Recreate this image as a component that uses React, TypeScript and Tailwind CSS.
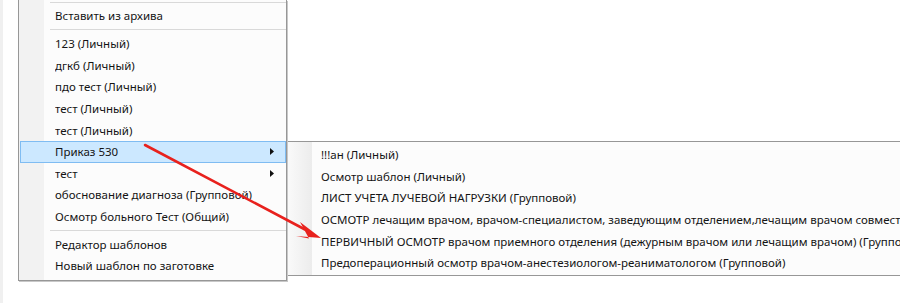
import React from "react";

type Item = { label: string; sub?: boolean; active?: boolean } | "sep";

const mainItems: Item[] = [
  { label: "Вставить из архива" },
  "sep",
  { label: "123 (Личный)" },
  { label: "дгкб (Личный)" },
  { label: "пдо тест (Личный)" },
  { label: "тест (Личный)" },
  { label: "тест (Личный)" },
  { label: "Приказ 530", sub: true, active: true },
  { label: "тест", sub: true },
  { label: "обоснование диагноза (Групповой)" },
  { label: "Осмотр больного Тест (Общий)" },
  "sep",
  { label: "Редактор шаблонов" },
  { label: "Новый шаблон по заготовке" },
];

const subItems = [
  "!!!ан (Личный)",
  "Осмотр шаблон (Личный)",
  "ЛИСТ УЧЕТА ЛУЧЕВОЙ НАГРУЗКИ (Групповой)",
  "ОСМОТР лечащим врачом, врачом-специалистом, заведующим отделением,лечащим врачом совместно",
  "ПЕРВИЧНЫЙ ОСМОТР врачом приемного отделения (дежурным врачом или лечащим врачом) (Групповой)",
  "Предоперационный осмотр врачом-анестезиологом-реаниматологом (Групповой)",
];

function Arrow() {
  return (
    <svg width="7" height="7" viewBox="0 0 7 7" className="shrink-0">
      <path d="M2 0 L6 3.5 L2 7 Z" fill="#111" />
    </svg>
  );
}

function MainMenu() {
  return (
    <div className="relative w-[269px] h-[281px] shrink-0 border-x border-b border-[#979797] bg-[#fcfcfc] shadow-[1px_1px_0_#c8c8c8] flex">
      <div className="absolute left-0 top-0 bottom-0 w-[25px] bg-[#f2f2f2]" />
      <div className="relative flex-1 flex flex-col pt-[2px]">
        <div className="h-px ml-[31px] bg-[#d9d9d9]" />
        <div className="h-[2px]" />
        {mainItems.map((it, i) =>
          it === "sep" ? (
            <div key={i} className="h-[6.4px] flex items-center">
              <div className="h-px w-full ml-[31px] bg-[#d9d9d9]" />
            </div>
          ) : (
            <div
              key={i}
              className={`h-[21.6px] flex items-center pl-[34px] pr-[10px] ml-px border ${
                it.active ? "bg-[#cce8ff] border-[#7fbcf2]" : "border-transparent"
              }`}
            >
              <span className="flex-1 truncate">{it.label}</span>
              {it.sub && <Arrow />}
            </div>
          )
        )}
      </div>
    </div>
  );
}

function SubMenu() {
  return (
    <div className="mt-[141px] h-[135px] flex-1 min-w-0 border-t border-b border-[#979797] bg-[#fcfcfc] flex overflow-hidden">
      <div className="w-[25px] shrink-0 bg-gradient-to-r from-[#fafafa] to-[#ececec]" />
      <div className="flex-1 min-w-0 flex flex-col pt-[2px]">
        {subItems.map((s, i) => (
          <div key={i} className="h-[21.6px] flex items-center pl-[9px] whitespace-nowrap">
            {s}
          </div>
        ))}
      </div>
    </div>
  );
}

export default function App() {
  return (
    <div
      className="relative w-[900px] h-[303px] overflow-hidden bg-white text-[11.5px] text-[#141414] flex"
      style={{ fontFamily: '"Noto Sans", "Open Sans", sans-serif' }}
    >
      <div className="w-[3px] shrink-0 bg-[#f0f0f0]" />
      <div className="w-[15px] shrink-0" />
      <MainMenu />
      <SubMenu />
      <svg className="absolute inset-0 pointer-events-none" width="900" height="303">
        <line x1="145" y1="145" x2="305" y2="229.5" stroke="#e8211d" strokeWidth="2.6" strokeLinecap="round" />
        <path d="M321 238 L300 222 L309 238.5 L296 236 Z" fill="#e8211d" />
      </svg>
    </div>
  );
}
